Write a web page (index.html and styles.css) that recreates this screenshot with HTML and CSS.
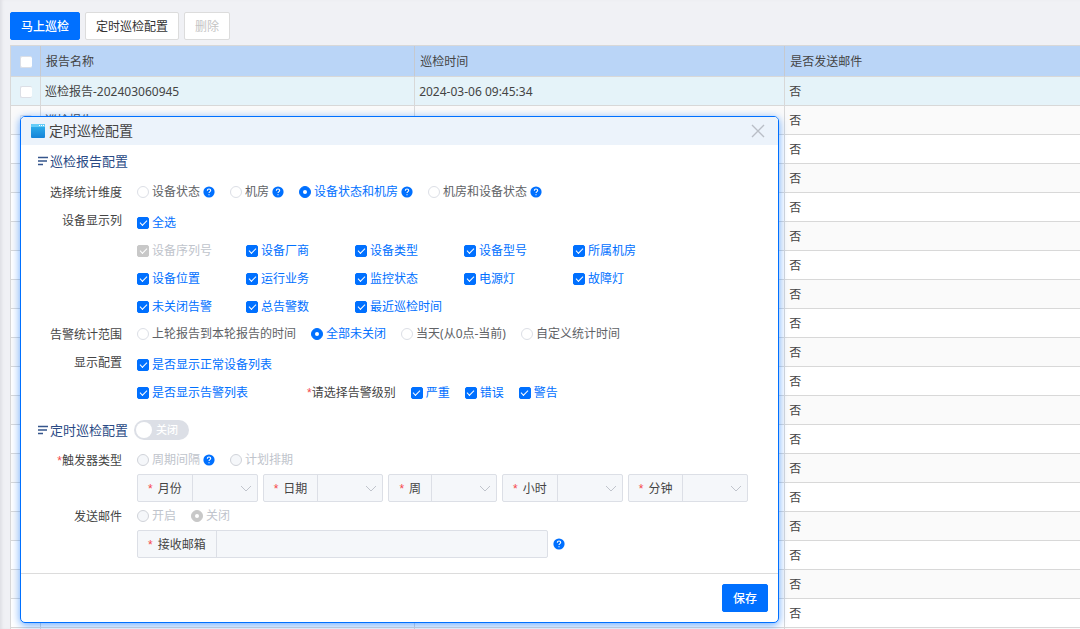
FILE: index.html
```html
<!DOCTYPE html>
<html lang="zh-CN">
<head>
<meta charset="utf-8">
<title>定时巡检配置</title>
<link rel="stylesheet" href="styles.css">
</head>
<body>
<svg class="defs" aria-hidden="true">
  <symbol id="help" viewBox="0 0 12 12">
    <circle cx="6" cy="6" r="5.6" fill="#0070ff"/>
    <path d="M4.3 4.8C4.3 3.6 5 3 6 3s1.7.6 1.7 1.5C7.700 5.600 6 5.600 6 7M6 8.200v1.100" fill="none" stroke="#fff" stroke-width="1.100"/>
  </symbol>
  <symbol id="lines" viewBox="0 0 11 10">
    <path d="M1 1.500h10M1 5h9M1 8.500h5" stroke="#35558c" stroke-width="1.300" fill="none"/>
  </symbol>
</svg>

<main class="page">
  <div class="toolbar">
    <button class="btn btn-primary" type="button">马上巡检</button>
    <button class="btn" type="button">定时巡检配置</button>
    <button class="btn" type="button" disabled>删除</button>
  </div>
  <table class="reports">
    <colgroup><col class="col-check"><col class="col-name"><col class="col-time"><col></colgroup>
    <thead>
      <tr><th><input class="box" type="checkbox" aria-label="全选报告"></th><th>报告名称</th><th>巡检时间</th><th>是否发送邮件</th></tr>
    </thead>
    <tbody>
      <tr class="current"><td><input class="box" type="checkbox" aria-label="选择报告"></td><td>巡检报告-202403060945</td><td>2024-03-06 09:45:34</td><td>否</td></tr>
      <tr><td><input class="box" type="checkbox" aria-label="选择报告"></td><td>巡检报告</td><td></td><td>否</td></tr>
      <tr><td></td><td></td><td></td><td>否</td></tr>
      <tr><td></td><td></td><td></td><td>否</td></tr>
      <tr><td></td><td></td><td></td><td>否</td></tr>
      <tr><td></td><td></td><td></td><td>否</td></tr>
      <tr><td></td><td></td><td></td><td>否</td></tr>
      <tr><td></td><td></td><td></td><td>否</td></tr>
      <tr><td></td><td></td><td></td><td>否</td></tr>
      <tr><td></td><td></td><td></td><td>否</td></tr>
      <tr><td></td><td></td><td></td><td>否</td></tr>
      <tr><td></td><td></td><td></td><td>否</td></tr>
      <tr><td></td><td></td><td></td><td>否</td></tr>
      <tr><td></td><td></td><td></td><td>否</td></tr>
      <tr><td></td><td></td><td></td><td>否</td></tr>
      <tr><td></td><td></td><td></td><td>否</td></tr>
      <tr><td></td><td></td><td></td><td>否</td></tr>
      <tr><td></td><td></td><td></td><td>否</td></tr>
      <tr><td></td><td></td><td></td><td>否</td></tr>
      <tr><td></td><td></td><td></td><td></td></tr>
    </tbody>
  </table>
</main>

<section class="dialog" role="dialog" aria-labelledby="dialog-title">
  <header class="dialog-head">
    <svg class="window-icon" viewBox="0 0 14 14" aria-hidden="true">
      <defs><linearGradient id="wg" x1="0" y1="0" x2="0" y2="1"><stop offset="0" stop-color="#32b5ee"/><stop offset="1" stop-color="#1583d8"/></linearGradient></defs>
      <rect width="14" height="14" rx="1" fill="url(#wg)"/>
      <path d="M0 1a1 1 0 0 1 1-1h12a1 1 0 0 1 1 1v2H0z" fill="#66cdf8"/>
      <path d="M8 1.500h1M10 1.500h1M12 1.500h1" stroke="#fff"/>
    </svg>
    <h1 class="dialog-title" id="dialog-title">定时巡检配置</h1>
    <button class="close" type="button" aria-label="关闭对话框"><svg viewBox="0 0 14 14"><path d="M1 1l12 12M13 1L1 13" stroke="#b9bec6" stroke-width="1.400"/></svg></button>
  </header>

  <form class="dialog-body">
    <h2 class="section"><svg class="lines"><use href="#lines"/></svg>巡检报告配置</h2>

    <div class="row">
      <span class="label">选择统计维度</span>
      <div class="options">
        <label class="opt"><input class="dot" type="radio" name="dim">设备状态<svg class="help"><use href="#help"/></svg></label>
        <label class="opt"><input class="dot" type="radio" name="dim">机房<svg class="help"><use href="#help"/></svg></label>
        <label class="opt"><input class="dot" type="radio" name="dim" checked>设备状态和机房<svg class="help"><use href="#help"/></svg></label>
        <label class="opt"><input class="dot" type="radio" name="dim">机房和设备状态<svg class="help"><use href="#help"/></svg></label>
      </div>
    </div>

    <div class="row">
      <span class="label">设备显示列</span>
      <div class="checks">
        <label class="opt opt-all"><input class="box" type="checkbox" checked>全选</label>
        <label class="opt"><input class="box" type="checkbox" checked disabled>设备序列号</label>
        <label class="opt"><input class="box" type="checkbox" checked>设备厂商</label>
        <label class="opt"><input class="box" type="checkbox" checked>设备类型</label>
        <label class="opt"><input class="box" type="checkbox" checked>设备型号</label>
        <label class="opt"><input class="box" type="checkbox" checked>所属机房</label>
        <label class="opt"><input class="box" type="checkbox" checked>设备位置</label>
        <label class="opt"><input class="box" type="checkbox" checked>运行业务</label>
        <label class="opt"><input class="box" type="checkbox" checked>监控状态</label>
        <label class="opt"><input class="box" type="checkbox" checked>电源灯</label>
        <label class="opt"><input class="box" type="checkbox" checked>故障灯</label>
        <label class="opt"><input class="box" type="checkbox" checked>未关闭告警</label>
        <label class="opt"><input class="box" type="checkbox" checked>总告警数</label>
        <label class="opt"><input class="box" type="checkbox" checked>最近巡检时间</label>
      </div>
    </div>

    <div class="row">
      <span class="label">告警统计范围</span>
      <div class="options">
        <label class="opt"><input class="dot" type="radio" name="range">上轮报告到本轮报告的时间</label>
        <label class="opt"><input class="dot" type="radio" name="range" checked>全部未关闭</label>
        <label class="opt"><input class="dot" type="radio" name="range">当天(从0点-当前)</label>
        <label class="opt"><input class="dot" type="radio" name="range">自定义统计时间</label>
      </div>
    </div>

    <div class="row">
      <span class="label">显示配置</span>
      <div class="checks checks-wide">
        <label class="opt opt-all"><input class="box" type="checkbox" checked>是否显示正常设备列表</label>
        <label class="opt"><input class="box" type="checkbox" checked>是否显示告警列表</label>
        <div class="levels" role="group" aria-labelledby="level-label">
          <span id="level-label"><span class="req">*</span>请选择告警级别</span>
          <label class="opt"><input class="box" type="checkbox" checked>严重</label>
          <label class="opt"><input class="box" type="checkbox" checked>错误</label>
          <label class="opt"><input class="box" type="checkbox" checked>警告</label>
        </div>
      </div>
    </div>

    <div class="section section-second">
      <svg class="lines"><use href="#lines"/></svg><h2 class="section-text">定时巡检配置</h2>
      <button class="switch" type="button" role="switch" aria-checked="false" aria-label="定时巡检"><span class="knob"></span><span class="switch-text">关闭</span></button>
    </div>

    <div class="row">
      <span class="label"><span class="req">*</span>触发器类型</span>
      <div class="options">
        <label class="opt"><input class="dot" type="radio" name="trigger" disabled>周期间隔<svg class="help"><use href="#help"/></svg></label>
        <label class="opt"><input class="dot" type="radio" name="trigger" disabled>计划排期</label>
      </div>
    </div>
    <div class="fields">
      <div class="field"><label class="prefix" for="month"><span class="req">*</span>月份</label><span class="pick"><select id="month" disabled></select><svg class="arrow" viewBox="0 0 12 7"><path d="M1 1l5 5 5-5"/></svg></span></div>
      <div class="field"><label class="prefix" for="day"><span class="req">*</span>日期</label><span class="pick"><select id="day" disabled></select><svg class="arrow" viewBox="0 0 12 7"><path d="M1 1l5 5 5-5"/></svg></span></div>
      <div class="field"><label class="prefix" for="week"><span class="req">*</span>周</label><span class="pick"><select id="week" disabled></select><svg class="arrow" viewBox="0 0 12 7"><path d="M1 1l5 5 5-5"/></svg></span></div>
      <div class="field"><label class="prefix" for="hour"><span class="req">*</span>小时</label><span class="pick"><select id="hour" disabled></select><svg class="arrow" viewBox="0 0 12 7"><path d="M1 1l5 5 5-5"/></svg></span></div>
      <div class="field"><label class="prefix" for="minute"><span class="req">*</span>分钟</label><span class="pick"><select id="minute" disabled></select><svg class="arrow" viewBox="0 0 12 7"><path d="M1 1l5 5 5-5"/></svg></span></div>
    </div>

    <div class="row">
      <span class="label">发送邮件</span>
      <div class="options">
        <label class="opt"><input class="dot" type="radio" name="mail" disabled>开启</label>
        <label class="opt"><input class="dot" type="radio" name="mail" checked disabled>关闭</label>
      </div>
    </div>
    <div class="fields">
      <div class="field field-mail"><label class="prefix" for="address"><span class="req">*</span>接收邮箱</label><input class="text" id="address" type="text" disabled></div>
      <svg class="help"><use href="#help"/></svg>
    </div>
  </form>

  <footer class="dialog-foot">
    <button class="btn btn-primary" type="button">保存</button>
  </footer>
</section>
</body>
</html>
```
FILE: styles.css
```css
* {
  box-sizing: border-box;
}

body {
  margin: 0;
  height: 100vh;
  overflow: hidden;
  position: relative;
  background: #f0f1f5;
  box-shadow: inset 3px 0 3px -1px #dfe0e5;
  color: #444;
  font: 12px/16px "Noto Sans", "Noto Sans CJK SC", sans-serif;
}

button,
input,
select {
  font: inherit;
  margin: 0;
}

.defs {
  position: absolute;
  width: 0;
  height: 0;
}

.page {
  padding: 12px 0 0 10px;
}

.toolbar {
  display: flex;
  gap: 5px;
  margin-bottom: 5px;
}

.btn {
  height: 28px;
  padding: 2px 10px 0;
  border: 1px solid #dcdcdc;
  border-radius: 2px;
  background: #fff;
  color: #333;
}

.btn:disabled {
  color: #c4c4c4;
}

.btn-primary {
  border-color: #0070ff;
  background: #0070ff;
  color: #fff;
  font-weight: 500;
}

/* report list */

.reports {
  width: 100%;
  table-layout: fixed;
  border-collapse: separate;
  border-spacing: 0;
  border-top: 1px solid #d8d8d8;
  border-left: 1px solid #d8d8d8;
}

.col-check {
  width: 30px;
}

.col-name {
  width: 35%;
}

.col-time {
  width: 370px;
}

.reports th,
.reports td {
  height: 29px;
  padding: 2px 4px 0;
  border-right: 1px solid #d8d8d8;
  border-bottom: 1px solid #d8d8d8;
  background: #fff;
  font-weight: 400;
  text-align: left;
  white-space: nowrap;
}

.reports th {
  height: 31px;
  padding: 2px 5px 0;
  border-right-color: #c6c9cf;
  background: #bad5f7;
}

.reports tr :first-child {
  padding: 0;
  text-align: center;
}

.reports tr :last-child {
  border-right: 0;
}

.reports tbody tr:nth-child(even) td {
  background: #fafafa;
}

.reports .current td {
  background: #e5f3f9;
}

.reports .box {
  border: 1px solid #dcdfe6;
  vertical-align: middle;
}

/* check boxes and radios */

.box,
.dot {
  appearance: none;
  display: inline-grid;
  place-items: center;
  flex: none;
  width: 12px;
  height: 12px;
  border: 1px solid #dcdfe6;
  border-radius: 2px;
  background: #fff;
}

.dot {
  border-radius: 50%;
}

.box:checked,
.dot:checked {
  border-color: #0070ff;
  background: #0070ff;
}

.box:checked::after {
  content: "";
  width: 6px;
  height: 3px;
  margin-bottom: 2px;
  border: solid #fff;
  border-width: 0 0 1px 1px;
  transform: rotate(-45deg);
}

.dot:checked::after {
  content: "";
  width: 4px;
  height: 4px;
  border-radius: 50%;
  background: #fff;
}

.box:disabled,
.dot:disabled {
  border-color: #d0d3d9;
  background: #f5f7fa;
}

.box:disabled:checked,
.dot:disabled:checked {
  border-color: #c8c8c8;
  background: #c8c8c8;
}

.opt {
  display: inline-flex;
  align-items: center;
  gap: 3px;
  color: #606266;
  line-height: 18px;
  white-space: nowrap;
}

.opt:has(:checked) {
  color: #0070ff;
}

.opt:has(:disabled) {
  color: #c0c4cc;
}

.help {
  flex: none;
  width: 12px;
  height: 12px;
}

.req {
  color: #f5474b;
  font-family: "Liberation Sans", sans-serif;
}

/* dialog */

.dialog {
  position: absolute;
  top: 116px;
  left: 20px;
  width: 759px;
  max-width: calc(100% - 40px);
  border: 1px solid #0070ff;
  border-radius: 5px;
  background: #fff;
  box-shadow: 0 2px 8px rgba(0, 112, 255, 0.6);
}

.dialog-head {
  display: flex;
  align-items: center;
  gap: 4px;
  height: 28px;
  padding: 0 13px 0 10px;
  border-radius: 4px 4px 0 0;
  background: #ecf3fb;
}

.window-icon {
  width: 14px;
  height: 14px;
}

.dialog-title {
  flex: 1;
  margin: 0;
  font-size: 14px;
  font-weight: 400;
}

.close {
  display: grid;
  padding: 0;
  border: 0;
  background: none;
}

.close svg {
  width: 14px;
  height: 14px;
}

.dialog-body {
  padding: 6px 16px 15px;
}

.section {
  display: flex;
  align-items: center;
  gap: 2px;
  height: 20px;
  margin: 0 0 7px;
  color: #2a4a85;
  font-size: 13px;
  font-weight: 400;
}

.section-second {
  margin: 14px 0 6px;
}

.section-text {
  margin: 0;
  font: inherit;
}

.lines {
  width: 11px;
  height: 10px;
}

.switch {
  display: flex;
  align-items: center;
  gap: 4px;
  width: 55px;
  height: 20px;
  margin-left: 4px;
  padding: 0 2px;
  border: 0;
  border-radius: 10px;
  background: #dcdfe6;
  color: #fff;
}

.knob {
  width: 16px;
  height: 16px;
  border-radius: 50%;
  background: #fff;
}

.switch-text {
  font-size: 11px;
  font-weight: 500;
}

.row {
  display: flex;
  align-items: flex-start;
  gap: 15px;
  min-height: 28px;
}

.label {
  flex: none;
  width: 85px;
  height: 28px;
  line-height: 30px;
  text-align: right;
}

.options {
  display: flex;
  align-items: center;
  gap: 15px;
  height: 27px;
}

.checks {
  display: grid;
  grid-template-columns: repeat(5, 109px);
  grid-auto-rows: 22px;
  row-gap: 6px;
  padding: 6px 0 2px;
}

.checks-wide {
  grid-template-columns: 170px auto;
}

.opt-all {
  grid-column: 1 / -1;
}

.levels {
  display: flex;
  align-items: center;
  gap: 15px;
}

.fields {
  display: flex;
  align-items: center;
  gap: 5px;
  margin-left: 100px;
}

.field {
  display: flex;
  height: 28px;
  border: 1px solid #dcdfe6;
  border-radius: 2px;
  background: #f5f7fa;
}

.prefix {
  display: flex;
  align-items: center;
  gap: 5px;
  padding: 2px 10px 0;
  border-right: 1px solid #dcdfe6;
  white-space: nowrap;
}

.pick {
  display: grid;
  align-items: center;
  justify-items: end;
}

.pick select,
.arrow {
  grid-area: 1 / 1;
}

.pick select {
  appearance: none;
  width: 64px;
  height: 26px;
  border: 0;
  background: none;
}

.arrow {
  width: 12px;
  height: 7px;
  margin-right: 5px;
  fill: none;
  stroke: #c0c4cc;
  pointer-events: none;
}

.field-mail {
  flex: 0 1 411px;
}

.text {
  flex: 1;
  min-width: 0;
  padding: 0 10px;
  border: 0;
  background: none;
}

.dialog-foot {
  display: flex;
  justify-content: flex-end;
  padding: 10px;
  border-top: 1px solid #dcdcdc;
}
```
